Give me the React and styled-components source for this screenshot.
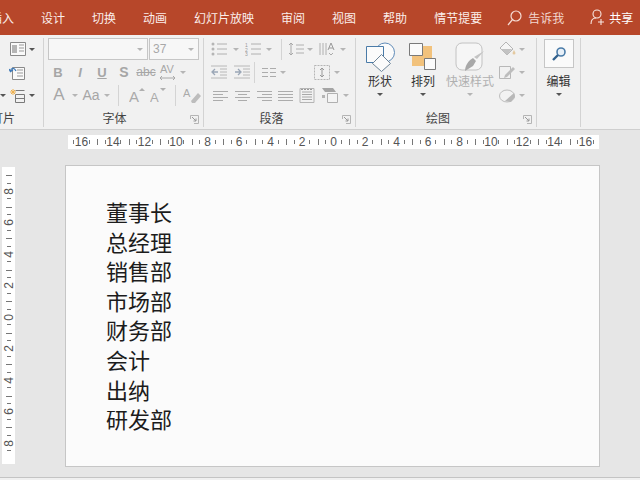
import styled, { createGlobalStyle } from "styled-components";

const GlobalStyle = createGlobalStyle`
  html, body {
    margin: 0;
    padding: 0;
    width: 640px;
    height: 480px;
    overflow: hidden;
    background: #f0f0f0;
    font-family: "Noto Sans CJK SC", "Liberation Sans", sans-serif;
  }
`;

const Window = styled.div`
  width: 640px;
  height: 480px;
  display: flex;
  flex-direction: column;
  overflow: hidden;
`;

/* title tabs */
const TabBar = styled.div`
  height: 35px;
  flex: none;
  background: #b7472a;
  display: flex;
  align-items: center;
  margin-left: -10px;
  width: 650px;
  color: #fff;
  font-size: 12px;
`;

const Tab = styled.div`
  margin-right: ${(p) => p.$gap || 27}px;
  white-space: nowrap;
  color: #fbeeea;
`;

const TellMe = styled.div`
  display: flex;
  align-items: center;
  gap: 6px;
  margin-right: 26px;
  color: #f3d8d0;
`;

const Share = styled.div`
  display: flex;
  align-items: center;
  gap: 4px;
`;

/* ribbon */
const Ribbon = styled.div`
  height: 91px;
  flex: none;
  padding-top: 3px;
  background: #f1f1f1;
  border-bottom: 1px solid #cfcfcf;
  display: flex;
  align-items: flex-start;
`;

const Group = styled.div`
  width: ${(p) => p.$w}px;
  height: 89px;
  flex: none;
  display: flex;
  flex-direction: column;
  box-sizing: border-box;
  border-right: 1px solid #d3d3d3;
  position: relative;
`;

const GroupBody = styled.div`
  flex: 1;
  display: ${(p) => (p.$row ? "flex" : "block")};
  padding-left: ${(p) => p.$pad || 0}px;
`;

const GroupLabel = styled.div`
  height: 18px;
  line-height: 18px;
  font-size: 12px;
  color: #444;
  text-align: ${(p) => p.$align || "center"};
  margin-left: ${(p) => p.$shift || 0}px;
  padding-right: ${(p) => p.$right || 0}px;
  white-space: nowrap;
`;

const Launcher = styled.svg`
  position: absolute;
  right: 4px;
  bottom: 3px;
  width: 9px;
  height: 9px;
`;

const ToolRow = styled.div`
  height: 22px;
  margin-bottom: 1px;
  display: flex;
  align-items: center;
  padding-left: ${(p) => p.$pad || 0}px;
`;

const Tool = styled.span`
  width: ${(p) => p.$w || 22}px;
  height: 22px;
  flex: none;
  display: inline-flex;
  align-items: center;
  justify-content: center;
  color: #a6a6a6;
  font-family: "Liberation Sans", sans-serif;
  font-size: ${(p) => p.$size || 12}px;
  font-weight: ${(p) => (p.$bold ? 700 : 400)};
  font-style: ${(p) => (p.$italic ? "italic" : "normal")};
  text-decoration: ${(p) => p.$deco || "none"};
`;

const Caret = styled.span`
  width: ${(p) => p.$w || 9}px;
  flex: none;
  display: inline-flex;
  justify-content: center;
  &::after {
    content: "";
    border-left: 3px solid transparent;
    border-right: 3px solid transparent;
    border-top: 3px solid ${(p) => (p.$dark ? "#555" : "#b5b5b5")};
  }
`;

const Divider = styled.span`
  width: 1px;
  height: 21px;
  flex: none;
  background: #d4d4d4;
  margin: 0 ${(p) => p.$gap || 5}px;
`;

const ComboRow = styled.div`
  height: 22px;
  margin-bottom: 1px;
  margin-left: 4px;
  display: flex;
`;

const Combo = styled.div`
  width: ${(p) => p.$w}px;
  box-sizing: border-box;
  border: 1px solid #c6c6c6;
  background: #f7f7f7;
  display: flex;
  align-items: center;
  justify-content: space-between;
  padding: 0 3px 0 3px;
  color: #a8a8a8;
  font-family: "Liberation Sans", sans-serif;
  font-size: 12px;
  margin-right: 1px;
`;

const LargeTool = styled.div`
  width: ${(p) => p.$w}px;
  margin-left: ${(p) => p.$gap || 0}px;
  flex: none;
  display: flex;
  flex-direction: column;
  align-items: center;
  padding-top: ${(p) => p.$top ?? 4}px;
  font-size: 12px;
  color: ${(p) => (p.$off ? "#b0b0b0" : "#333")};
`;

const LargeIcon = styled.div`
  height: 30px;
  display: flex;
  align-items: center;
  justify-content: center;
`;

const LargeText = styled.div`
  height: 18px;
  line-height: 18px;
  margin-bottom: 3px;
  white-space: nowrap;
`;

const SmallStack = styled.div`
  margin-left: 2px;
`;

const EditButton = styled.div`
  width: 30px;
  height: 29px;
  box-sizing: border-box;
  margin-top: 1px;
  margin-bottom: 4px;
  border: 1px solid #c6c6c6;
  background: #fafafa;
  display: flex;
  align-items: center;
  justify-content: center;
`;

/* canvas + rulers */
const Canvas = styled.div`
  height: 347px;
  flex: none;
  background: #e6e6e6;
  border-bottom: 1px solid #c4c4c4;
`;

const HRuler = styled.div`
  width: 531px;
  height: 14px;
  margin: 5px 0 0 68px;
  background: #fff;
  overflow: hidden;
  display: flex;
  justify-content: center;
`;

const VRuler = styled.div`
  width: 13px;
  height: 297px;
  box-sizing: border-box;
  padding-top: 3px;
  flex: none;
  margin: 2px 0 0 2px;
  background: #fff;
  overflow: hidden;
  display: flex;
  flex-direction: column;
  justify-content: center;
`;

const RulerCell = styled.div`
  flex: none;
  display: flex;
  align-items: center;
  flex-direction: ${(p) => (p.$vertical ? "column" : "row")};
  width: ${(p) => (p.$vertical ? "13px" : "31.5px")};
  height: ${(p) => (p.$vertical ? "31.5px" : "14px")};
  font-family: "Liberation Sans", sans-serif;
  font-size: 12px;
  line-height: 12px;
  color: #555;
  &::before {
    content: "";
    flex: none;
    background: #777;
    width: ${(p) => (p.$vertical ? "6px" : "1px")};
    height: ${(p) => (p.$vertical ? "1px" : "6px")};
    margin: ${(p) => (p.$vertical ? "0 0 -1px 0" : "0 -1px 0 0")};
  }
`;

const RulerTick = styled.span`
  flex: 1;
  display: flex;
  align-items: center;
  justify-content: center;
  align-self: stretch;
  &::after {
    content: "";
    background: #777;
    width: ${(p) => (p.$vertical ? "4px" : "1px")};
    height: ${(p) => (p.$vertical ? "1px" : "4px")};
  }
`;

const RulerNumber = styled.span`
  width: 0;
  height: 0;
  display: flex;
  align-items: center;
  justify-content: center;
  white-space: nowrap;
  background: #fff;
  span {
    background: #fff;
    writing-mode: ${(p) => (p.$vertical ? "vertical-rl" : "horizontal-tb")};
    transform: ${(p) => (p.$vertical ? "rotate(180deg)" : "none")};
  }
`;

const WorkArea = styled.div`
  display: flex;
  margin-top: 16px;
`;

const Slide = styled.div`
  width: 535px;
  height: 302px;
  box-sizing: border-box;
  flex: none;
  margin-left: 50px;
  background: #fbfbfb;
  border: 1px solid #c6c6c6;
  padding: 31px 0 0 40px;
`;

const SlideLine = styled.div`
  font-size: 22px;
  height: 29.6px;
  line-height: 29.6px;
  color: #1c1c1c;
`;

const Icon = ({ w = 16, h = 14, children }) => (
  <svg width={w} height={h} viewBox={`0 0 ${w} ${h}`} fill="none">
    {children}
  </svg>
);

const Lines = ({ rows, color = "#acacac", w = 16, h = 13 }) => (
  <Icon w={w} h={h}>
    {rows.map(([a, b, y]) => (
      <line key={`${a}${y}`} x1={a} x2={b} y1={y + 0.5} y2={y + 0.5} stroke={color} />
    ))}
  </Icon>
);

const Bullets = () => (
  <Icon>
    <circle cx="2" cy="2" r="1.5" fill="#b5b5b5" />
    <circle cx="2" cy="7" r="1.5" fill="#b5b5b5" />
    <circle cx="2" cy="12" r="1.5" fill="#b5b5b5" />
    <path d="M6 2h10M6 7h10M6 12h10" stroke="#b0b0b0" />
  </Icon>
);

const Numbering = () => (
  <Icon>
    <text x="0" y="4.5" fontSize="5" fill="#999" fontFamily="Liberation Sans">1</text>
    <text x="0" y="9.5" fontSize="5" fill="#999" fontFamily="Liberation Sans">2</text>
    <text x="0" y="14" fontSize="5" fill="#999" fontFamily="Liberation Sans">3</text>
    <path d="M6 2h10M6 7h10M6 12h10" stroke="#b0b0b0" />
  </Icon>
);

const LineSpacing = () => (
  <Icon>
    <path d="M3 1v12M1 3l2-2 2 2M1 11l2 2 2-2" stroke="#a8a8a8" />
    <path d="M8 3h8M8 7h8M8 11h8" stroke="#b0b0b0" />
  </Icon>
);

const TextDirection = () => (
  <Icon>
    <path d="M1 1v12M4 1v12M7 1v12" stroke="#b0b0b0" />
    <path d="M9 8l3-7 3 7M10 6h4" stroke="#999" />
    <path d="M10 11l2 2 2-2" stroke="#aaa" />
  </Icon>
);

const Indent = ({ flip }) => (
  <Icon>
    <path d="M0 1h16M9 4h7M9 7h7M9 10h7M0 13h16" stroke="#b8b8b8" />
    <path
      d={flip ? "M1 7h5M4 4l3 3-3 3" : "M7 7H2M4 4L1 7l3 3"}
      stroke="#9aa6b6"
      strokeWidth="1.3"
    />
  </Icon>
);

const Columns = () => (
  <Lines rows={[[0, 6, 2], [8, 14, 2], [0, 6, 6], [8, 14, 6], [0, 6, 10], [8, 14, 10]]} w={14} />
);

const AlignBox = () => (
  <Icon h={15}>
    <path d="M.5.5h15v14H.5z" stroke="#b5b5b5" strokeDasharray="2 1" />
    <path d="M8 3v9M6 5l2-2 2 2M6 10l2 2 2-2" stroke="#999" />
  </Icon>
);

const Justify = () => (
  <Icon w={16} h={15}>
    <path d="M1 .5h14v14H1z" stroke="#b5b5b5" />
    <path d="M3 4h10M3 6.500h10M3 9h10M3 11.500h10" stroke="#a8a8a8" />
    <path d="M2 1.500h12" stroke="#999" strokeDasharray="2 1" />
  </Icon>
);

const SmartArt = () => (
  <Icon w={18} h={16}>
    <path d="M1 1h11l3 4H4z" fill="#a5a5a5" />
    <path d="M6.500 6.500h10v9h-10z" fill="#f4f4f4" stroke="#b0b0b0" />
    <path d="M1 8h3v3H1z" fill="#b5b5b5" />
  </Icon>
);

const ClearFormat = () => (
  <Icon w={18} h={17}>
    <text x="0" y="10" fontSize="11" fill="#aaa" fontFamily="Liberation Sans">A</text>
    <path d="M8 14l7-8 3 3-6 7H9z" fill="#bdbdbd" />
  </Icon>
);

const Grow = ({ down }) => (
  <Icon w={16} h={16}>
    <text x="0" y="15" fontSize={down ? 13 : 15} fill="#aaa" fontFamily="Liberation Sans">A</text>
    <path d={down ? "M10 1h6l-3 3z" : "M10 4h6l-3-3z"} fill="#b0b0b0" />
  </Icon>
);

const SpacingAV = () => (
  <Icon w={18} h={18}>
    <text x="1" y="10" fontSize="11" fill="#a8a8a8" fontFamily="Liberation Sans">AV</text>
    <path d="M1 15h15M3 13l-2 2 2 2M14 13l2 2-2 2" stroke="#a8a8a8" />
  </Icon>
);

const LayoutIcon = () => (
  <Icon w={16} h={14}>
    <path d="M.5.5h15v13H.5z" fill="#fafafa" stroke="#8a8a8a" />
    <path d="M2 3h5v8H2z" fill="#b5b5b5" />
    <path d="M9 3h5M9 6h5M9 9h5" stroke="#999" />
  </Icon>
);

const ResetIcon = () => (
  <Icon w={16} h={15}>
    <path d="M3.500 2.500h12v12h-12z" fill="#fafafa" stroke="#8a8a8a" />
    <path d="M8 8h6M8 11h6M8 5h6" stroke="#999" />
    <path d="M7 6C5 2 2 3 1.500 6M0 4l1.500 2.500L4 5" stroke="#3d79b8" strokeWidth="1.3" />
  </Icon>
);

const SectionIcon = () => (
  <Icon w={17} h={15}>
    <path d="M3 1v6M0 4h6M1 2l4 4M5 2L1 6" stroke="#eeb04e" />
    <path d="M5.500 2.500h9M5.500 6.500h9v8h-9zM5.500 10.500h9" stroke="#7a7a7a" fill="none" />
  </Icon>
);

const Shapes = () => (
  <Icon w={30} h={30}>
    <circle cx="20" cy="10.500" r="9.500" fill="#fbfbfb" stroke="#5f8bb8" />
    <path d="M1.500 4.500h17v16h-17z" fill="#fbfbfb" stroke="#4a7ba8" />
    <path d="M16.500 12.500l9 9-9 8-9-8z" fill="#fbfbfb" stroke="#6d8498" />
  </Icon>
);

const Arrange = () => (
  <Icon w={28} h={28}>
    <path d="M3 3h20v20H3z" fill="#f2c27c" />
    <path d="M.5.500h13v12H.5z" fill="#fbfbfb" stroke="#7a7a7a" />
    <path d="M15.500 15.500h11v11h-11z" fill="#fbfbfb" stroke="#7a7a7a" />
  </Icon>
);

const QuickStyle = () => (
  <Icon w={30} h={30}>
    <rect x="1" y="1" width="26" height="27" rx="6" fill="#f6f6f6" stroke="#c2c2c2" />
    <path d="M29 9l-7 8-3-2z" fill="#c4c4c4" />
    <path d="M18 16l3 3-3 5-8 5c0-5 3-10 8-13z" fill="#a8a8a8" />
  </Icon>
);

const Bucket = () => (
  <Icon w={17} h={16}>
    <path d="M7 1l7 7-6 6-7-7z" fill="#f6f6f6" stroke="#b5b5b5" />
    <path d="M2 8h11l-5 6z" fill="#c2c2c2" />
    <path d="M15 9l1.500 3a1.500 1.500 0 01-3 0z" fill="#e4c9a0" />
  </Icon>
);

const Outline = () => (
  <Icon w={17} h={15}>
    <path d="M.5 1.500h11v12H.5z" stroke="#b8b8b8" />
    <path d="M6 10l8-8 2 2-8 8-3 1z" fill="#bdbdbd" />
  </Icon>
);

const Effects = () => (
  <Icon w={17} h={15}>
    <ellipse cx="8" cy="8" rx="7.500" ry="6" fill="#f2f2f2" stroke="#bdbdbd" />
    <path d="M6 13l9-8 1 4-4 5z" fill="#b8b8b8" />
  </Icon>
);

const Magnifier = () => (
  <Icon w={16} h={16}>
    <circle cx="10" cy="6" r="4" stroke="#4a7ba8" strokeWidth="1.6" fill="#e8f0f8" />
    <path d="M7 9l-5 5" stroke="#32618d" strokeWidth="2.4" />
  </Icon>
);

const TellIcon = () => (
  <Icon w={15} h={16}>
    <circle cx="9" cy="6" r="5" stroke="#f6dcd4" strokeWidth="1.2" />
    <path d="M5.500 9.500L1 15" stroke="#f6dcd4" strokeWidth="1.2" />
  </Icon>
);

const ShareIcon = () => (
  <Icon w={15} h={17}>
    <circle cx="7" cy="5" r="4" stroke="#f9e7e2" strokeWidth="1.1" />
    <path d="M1 15c0-4 2-6 5-6M11 10v6M8 13h6" stroke="#f9e7e2" strokeWidth="1.1" />
  </Icon>
);

const DialogMark = () => (
  <Launcher viewBox="0 0 9 9" fill="none">
    <path d="M.5 4V.5H8.500V8.500H4" stroke="#b5b5b5" />
    <path d="M2 2l4 4M6 3.500V6H3.500" stroke="#999" />
  </Launcher>
);

const tabs = ["插入", "设计", "切换", "动画", "幻灯片放映", "审阅", "视图", "帮助"];
const slideLines = ["董事长", "总经理", "销售部", "市场部", "财务部", "会计", "出纳", "研发部"];
const hNumbers = [16, 14, 12, 10, 8, 6, 4, 2, 0, 2, 4, 6, 8, 10, 12, 14, 16];
const vNumbers = [8, 6, 4, 2, 0, 2, 4, 6, 8];

const Ruler = ({ numbers, vertical }) =>
  numbers.map((n, i) => (
    <RulerCell key={i} $vertical={vertical}>
      <RulerTick $vertical={vertical} />
      <RulerNumber $vertical={vertical}>
        <span>{n}</span>
      </RulerNumber>
      <RulerTick $vertical={vertical} />
    </RulerCell>
  ));

export default function App() {
  return (
    <Window>
      <GlobalStyle />
      <TabBar>
        {tabs.map((t) => (
          <Tab key={t}>{t}</Tab>
        ))}
        <Tab $gap={25}>情节提要</Tab>
        <TellMe>
          <TellIcon />
          告诉我
        </TellMe>
        <Share>
          <ShareIcon />
          共享
        </Share>
      </TabBar>

      <Ribbon>
        <Group $w={44}>
          <GroupBody>
            <ToolRow $pad={10}>
              <LayoutIcon />
              <Caret $dark $w={11} />
            </ToolRow>
            <ToolRow $pad={9}>
              <ResetIcon />
            </ToolRow>
            <ToolRow>
              <Caret $dark $w={6} />
              <Tool $w={4} />
              <SectionIcon />
              <Caret $dark $w={9} />
            </ToolRow>
          </GroupBody>
          <GroupLabel $align="left" $shift={-9}>
            灯片
          </GroupLabel>
        </Group>

        <Group $w={160}>
          <GroupBody>
            <ComboRow>
              <Combo $w={100}>
                <span />
                <Caret />
              </Combo>
              <Combo $w={50}>
                <span>37</span>
                <Caret />
              </Combo>
            </ComboRow>
            <ToolRow $pad={3}>
              <Tool $bold $size={13}>B</Tool>
              <Tool $italic $bold $size={13}>I</Tool>
              <Tool $bold $size={13} $deco="underline">U</Tool>
              <Tool $bold $size={14}>S</Tool>
              <Tool $deco="line-through">abc</Tool>
              <Tool $w={21}><SpacingAV /></Tool>
              <Caret $w={9} />
            </ToolRow>
            <ToolRow $pad={3}>
              <Tool $w={24} $size={17}>A</Tool>
              <Caret $w={8} />
              <Tool $w={24} $size={14}>Aa</Tool>
              <Caret $w={8} />
              <Divider $gap={7} />
              <Tool $w={21}><Grow /></Tool>
              <Tool $w={21}><Grow down /></Tool>
              <Divider $gap={7} />
              <Tool $w={18}><ClearFormat /></Tool>
            </ToolRow>
          </GroupBody>
          <GroupLabel $right={18}>字体</GroupLabel>
          <DialogMark />
        </Group>

        <Group $w={152}>
          <GroupBody>
            <ToolRow $pad={6}>
              <Tool $w={17}><Bullets /></Tool>
              <Caret $w={17} />
              <Tool $w={17}><Numbering /></Tool>
              <Caret $w={15} />
              <Divider $gap={5} />
              <Tool $w={17}><LineSpacing /></Tool>
              <Caret $w={12} />
              <Tool $w={21}><TextDirection /></Tool>
              <Caret $w={11} />
            </ToolRow>
            <ToolRow $pad={6}>
              <Tool $w={18}><Indent /></Tool>
              <Tool $w={5} />
              <Tool $w={18}><Indent flip /></Tool>
              <Divider $gap={3} />
              <Tool $w={22}><Columns /></Tool>
              <Caret $w={6} />
              <Tool $w={27} />
              <Tool $w={18}><AlignBox /></Tool>
              <Caret $w={11} />
            </ToolRow>
            <ToolRow $pad={6}>
              <Tool $w={21}><Lines rows={[[0, 15, 2], [0, 10, 5], [0, 15, 8], [0, 10, 11]]} /></Tool>
              <Tool $w={23}><Lines rows={[[0, 15, 2], [3, 12, 5], [0, 15, 8], [3, 12, 11]]} /></Tool>
              <Tool $w={21}><Lines rows={[[0, 15, 2], [5, 15, 5], [0, 15, 8], [5, 15, 11]]} /></Tool>
              <Tool $w={21}><Lines rows={[[0, 15, 2], [0, 15, 5], [0, 15, 8], [0, 15, 11]]} /></Tool>
              <Tool $w={22}><Justify /></Tool>
              <Tool $w={23}><SmartArt /></Tool>
              <Caret $w={9} />
            </ToolRow>
          </GroupBody>
          <GroupLabel $right={16}>段落</GroupLabel>
          <DialogMark />
        </Group>

        <Group $w={181}>
          <GroupBody $row $pad={6}>
            <LargeTool $w={36}>
              <LargeIcon><Shapes /></LargeIcon>
              <LargeText>形状</LargeText>
              <Caret $dark />
            </LargeTool>
            <LargeTool $w={36} $gap={7}>
              <LargeIcon><Arrange /></LargeIcon>
              <LargeText>排列</LargeText>
              <Caret $dark />
            </LargeTool>
            <LargeTool $w={50} $gap={4} $off>
              <LargeIcon><QuickStyle /></LargeIcon>
              <LargeText>快速样式</LargeText>
              <Caret />
            </LargeTool>
            <SmallStack>
              <ToolRow $pad={2}>
                <Bucket />
                <Caret $w={12} />
              </ToolRow>
              <ToolRow $pad={2}>
                <Outline />
                <Caret $w={12} />
              </ToolRow>
              <ToolRow $pad={2}>
                <Effects />
                <Caret $w={12} />
              </ToolRow>
            </SmallStack>
          </GroupBody>
          <GroupLabel $align="left" $shift={70}>绘图</GroupLabel>
          <DialogMark />
        </Group>

        <Group $w={44}>
          <LargeTool $w={43} $top={0}>
            <EditButton>
              <Magnifier />
            </EditButton>
            <LargeText>编辑</LargeText>
            <Caret $dark />
          </LargeTool>
        </Group>
      </Ribbon>

      <Canvas>
        <HRuler>
          <Ruler numbers={hNumbers} />
        </HRuler>
        <WorkArea>
          <VRuler>
            <Ruler numbers={vNumbers} vertical />
          </VRuler>
          <Slide>
            {slideLines.map((line) => (
              <SlideLine key={line}>{line}</SlideLine>
            ))}
          </Slide>
        </WorkArea>
      </Canvas>
    </Window>
  );
}
